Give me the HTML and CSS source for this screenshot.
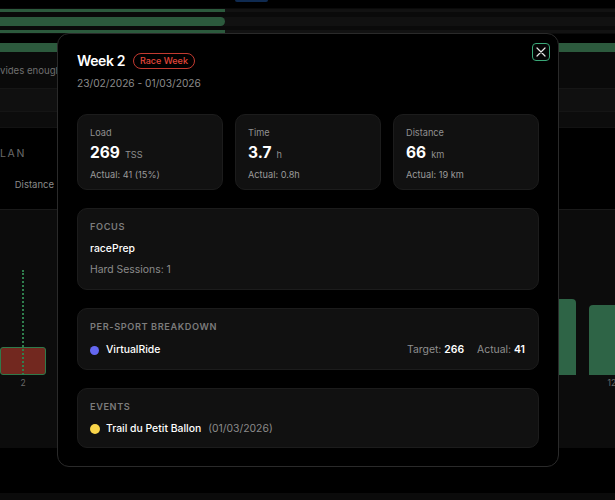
FILE: index.html
```html
<!DOCTYPE html>
<html lang="en">
<head>
<meta charset="utf-8">
<title>Week 2</title>
<link rel="stylesheet" href="styles.css">
</head>
<body>
<div class="page">
  <div class="topbar"><div class="topbtn"></div></div>
  <div class="progress">
    <div class="prow prow-thin"><div class="pfill"></div></div>
    <div class="prow prow-thick"><div class="pfill pfill-round"></div></div>
    <div class="prow prow-thin"><div class="pfill"></div></div>
  </div>
  <div class="fullbar"></div>
  <div class="notice"><span class="notice-text">vides enough</span></div>
  <div class="band band-a"></div>
  <div class="band band-b"></div>
  <div class="plan">
    <div class="plan-title">LAN</div>
    <div class="plan-col">Distance</div>
  </div>
  <div class="chart">
    <div class="col"><div class="bar bar-red" style="height:28px"><span class="target"></span></div><span class="wk">2</span></div>
    <div class="col"><div class="bar" style="height:40px"></div><span class="wk">3</span></div>
    <div class="col"><div class="bar" style="height:50px"></div><span class="wk">4</span></div>
    <div class="col"><div class="bar" style="height:60px"></div><span class="wk">5</span></div>
    <div class="col"><div class="bar" style="height:60px"></div><span class="wk">6</span></div>
    <div class="col"><div class="bar" style="height:66px"></div><span class="wk">7</span></div>
    <div class="col"><div class="bar" style="height:70px"></div><span class="wk">8</span></div>
    <div class="col"><div class="bar" style="height:72px"></div><span class="wk">9</span></div>
    <div class="col"><div class="bar" style="height:74px"></div><span class="wk">10</span></div>
    <div class="col"><div class="bar" style="height:76px"></div><span class="wk">11</span></div>
    <div class="col"><div class="bar" style="height:70px"></div><span class="wk">12</span></div>
  </div>
  <div class="footer-gap"></div>
  <div class="footer"></div>
</div>

<div class="modal">
  <button class="close" aria-label="Close">
    <svg width="10" height="10" viewBox="0 0 10 10"><path d="M1 1L9 9M9 1L1 9" stroke="#e8e8e8" stroke-width="1.2" stroke-linecap="round"/></svg>
  </button>
  <div class="head">
    <h2 class="title">Week 2</h2>
    <span class="badge">Race Week</span>
  </div>
  <div class="dates">23/02/2026 - 01/03/2026</div>

  <div class="stats">
    <div class="card stat">
      <div class="stat-label">Load</div>
      <div class="stat-value">269<span class="unit">TSS</span></div>
      <div class="stat-actual">Actual: 41 (15%)</div>
    </div>
    <div class="card stat">
      <div class="stat-label">Time</div>
      <div class="stat-value">3.7<span class="unit">h</span></div>
      <div class="stat-actual">Actual: 0.8h</div>
    </div>
    <div class="card stat">
      <div class="stat-label">Distance</div>
      <div class="stat-value">66<span class="unit">km</span></div>
      <div class="stat-actual">Actual: 19 km</div>
    </div>
  </div>

  <div class="card section focus">
    <div class="sec-title">FOCUS</div>
    <div class="focus-name">racePrep</div>
    <div class="focus-hard">Hard Sessions: 1</div>
  </div>

  <div class="card section">
    <div class="sec-title">PER-SPORT BREAKDOWN</div>
    <div class="row">
      <span class="dot dot-blue"></span>
      <span class="row-name">VirtualRide</span>
      <span class="row-right"><span class="lbl">Target:</span> <b>266</b><span class="lbl lbl-gap">Actual:</span> <b>41</b></span>
    </div>
  </div>

  <div class="card section events">
    <div class="sec-title">EVENTS</div>
    <div class="row">
      <span class="dot dot-yellow"></span>
      <span class="row-name">Trail du Petit Ballon</span>
      <span class="row-date">(01/03/2026)</span>
    </div>
  </div>
</div>
</body>
</html>
```

FILE: styles.css
```css
* { box-sizing: border-box; }
html, body { margin: 0; padding: 0; }
body {
  background: #000;
  font-family: Inter, "Noto Sans", "Liberation Sans", sans-serif;
  width: 615px;
  height: 500px;
  overflow: hidden;
}
.page { width: 615px; overflow: hidden; }

.topbar { height: 8px; background: #000; }
.topbtn {
  margin-left: 235px; width: 33px; height: 2px;
  background: #0f2a50; border-radius: 0 0 4px 4px;
}

.progress { height: 26px; background: #0a0a0a; padding-top: 1px; display: flex; flex-direction: column; }
.prow { background: #121212; display: flex; }
.prow-thin { height: 3px; }
.prow-thick { height: 9px; margin: 5px 0 4px; background: #111; }
.pfill { width: 225px; background: #2c5a3d; }
.pfill-round { border-radius: 0 5px 5px 0; }

.fullbar { height: 9px; margin-top: 9px; background: #2c5a3d; }

.notice { height: 36px; background: #0a0a0a; display: flex; align-items: center; }
.notice-text { color: #6f6f6f; font-size: 9.6px; padding-top: 1px; white-space: nowrap; }

.band-a { height: 23px; background: #101010; border-top: 1px solid #161616; }
.band-b { height: 17px; background: #0c0c0c; border-top: 1px solid #151515; border-bottom: 1px solid #121212; }

.plan { height: 81px; background: #000; display: flex; flex-direction: column; width: 57px; }
.plan-title { color: #6a6a6a; font-size: 10.5px; letter-spacing: 1.6px; margin-top: 19px; }
.plan-col { color: #8a8a8a; font-size: 9.5px; text-align: right; margin-top: 19px; padding-right: 3px; }

.chart {
  height: 239px; background: #0c0c0c; border-top: 1px solid #1a1a1a;
  display: flex; gap: 12.9px; align-items: flex-end; padding-bottom: 73px;
  overflow: hidden; position: relative;
}
.col { width: 46px; flex: none; display: flex; flex-direction: column; align-items: center; position: relative; }
.bar { width: 46px; background: #2e6446; border-radius: 4px 4px 0 0; position: relative; }
.bar-red { background: #72281f; border: 1px solid #2f7a4a; border-radius: 3px; }
.target {
  position: absolute; left: 21px; bottom: -1px; height: 105px;
  border-left: 2px dotted #2f7f4e;
}
.wk { position: absolute; top: calc(100% + 3px); color: #6a6a6a; font-size: 8.5px; }

.footer-gap { height: 45px; background: #000; }
.footer { height: 10px; background: #0b0b0b; }

/* modal */
.modal {
  position: fixed; left: 57px; top: 33px; width: 502px;
  background: #000; border: 1px solid #2a2a2a; border-radius: 12px;
  padding: 18px 19px 18px;
  color: #fff;
}
.close {
  position: absolute; top: 9px; right: 8px;
  width: 18px; height: 18px; padding: 0;
  background: #050505; border: 1.5px solid #3aa878; border-radius: 4px;
  display: flex; align-items: center; justify-content: center;
}
.head { display: flex; align-items: center; gap: 8px; height: 18px; }
.title { margin: 0; font-size: 14px; font-weight: 600; line-height: 18px; letter-spacing: -0.4px; }
.badge {
  font-size: 9px; font-weight: 500; color: #e4473b;
  border: 1px solid #c23a30; border-radius: 9px;
  padding: 0 6px; height: 16px; line-height: 14px;
}
.dates { margin-top: 5px; font-size: 10.2px; line-height: 16px; color: #8b8b8b; }

.card { background: #111; border: 1px solid #1c1c1c; border-radius: 10px; }

.stats { display: grid; grid-template-columns: repeat(3, 1fr); gap: 12px; margin-top: 23px; }
.stat { padding: 11px 12px 9px; height: 76px; }
.stat-label { font-size: 9.2px; line-height: 14px; color: #909090; }
.stat-value { margin-top: 3px; font-size: 15.5px; font-weight: 700; line-height: 20px; }
.unit { font-size: 9.2px; font-weight: 400; color: #8f8f8f; margin-left: 5px; }
.stat-actual { margin-top: 3px; font-size: 9.2px; line-height: 14px; color: #9a9a9a; }

.section { margin-top: 18px; padding: 11px 12px 11px; }
.events { padding-bottom: 10px; }
.sec-title { font-size: 9.2px; font-weight: 600; letter-spacing: 0.6px; line-height: 14px; color: #7c7c7c; }
.focus-name { margin-top: 7px; font-size: 10.4px; font-weight: 500; line-height: 16px; }
.focus-hard { margin-top: 5px; font-size: 10.4px; line-height: 16px; color: #8b8b8b; }

.row { display: flex; align-items: center; margin-top: 8px; line-height: 16px; font-size: 10.4px; }
.events .row { margin-top: 7px; }
.dot { width: 9px; height: 9px; border-radius: 50%; flex: none; margin-right: 7px; }
.dot-blue { background: #6467f0; }
.dot-yellow { width: 10px; height: 10px; background: #f9d54a; margin-right: 6px; }
.row-name { font-weight: 500; }
.row-date { color: #8b8b8b; margin-left: 7px; }
.row-right { margin-left: auto; margin-right: 1px; color: #fff; }
.row-right b { font-weight: 600; }
.lbl { color: #8f8f8f; }
.lbl-gap { margin-left: 13px; }
```
